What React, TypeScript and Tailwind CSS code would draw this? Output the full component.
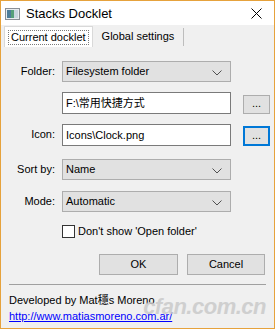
import React from "react";

const Chevron = () => (
  <svg width="10" height="6" viewBox="0 0 10 6" className="absolute right-[8px] top-[8px]">
    <path d="M0.5 0.5 L5 5 L9.5 0.5" fill="none" stroke="#505050" strokeWidth="1" />
  </svg>
);

const Select = ({ value, top }: { value: string; top: string }) => (
  <div className={`relative h-[21px] w-[169px] bg-[#e1e1e1] border border-[#adadad] pl-[3px] leading-[19px] ${top}`}>
    {value}
    <Chevron />
  </div>
);

export default function App() {
  return (
    <div
      className="w-[275px] h-[329px] border border-[#e6a23c] bg-[#f0f0f0] flex flex-col text-[11px] text-black overflow-hidden"
      style={{ fontFamily: '"Liberation Sans", "Noto Sans CJK SC", sans-serif' }}
    >
      {/* Title bar */}
      <div className="h-[24px] bg-white flex items-center shrink-0">
        <svg width="15" height="12" viewBox="0 0 15 12" className="ml-[4px] mt-[1px]">
          <rect x="0.5" y="0.5" width="14" height="11" fill="#e8ecef" stroke="#8a8f96" />
          <rect x="2" y="2" width="4" height="8" fill="#4d7d9a" />
          <rect x="6" y="2" width="3" height="8" fill="#56a07a" />
          <rect x="9" y="2" width="4" height="8" fill="#c9d6df" />
        </svg>
        <span className="ml-[6px] text-[13px] leading-none">Stacks Docklet</span>
        <svg width="11" height="11" viewBox="0 0 11 11" className="ml-auto mr-[12px] mt-[1px]">
          <path d="M0.5 0.5 L10.5 10.5 M10.5 0.5 L0.5 10.5" stroke="#000" strokeWidth="1" />
        </svg>
      </div>

      {/* Tabs */}
      <div className="flex items-end h-[22px] pl-[3px] shrink-0">
        <div className="h-[21px] bg-white border border-[#d9d9d9] border-b-0 px-[3px] flex items-center">
          <div className="border border-dotted border-[#7a7a7a] px-[2px] h-[15px] leading-[13px]">Current docklet</div>
        </div>
        <div className="h-[18px] border-r border-[#bdbdbd] pl-[9px] pr-[9px] leading-[17px] mb-[1px]">Global settings</div>
      </div>

      {/* Form */}
      <div className="grid grid-cols-[53px_auto_auto] gap-x-[7px] items-center mt-[14px] ml-[1px]">
        <div className="text-right">Folder:</div>
        <Select value="Filesystem folder" top="" />
        <div />

        <div />
        <div className="h-[22px] w-[169px] bg-white border border-[#7a7a7a] pl-[3px] leading-[20px] mt-[10px]">F:\常用快捷方式</div>
        <div className="h-[19px] w-[27px] bg-[#e1e1e1] border border-[#adadad] text-center leading-[15px] mt-[12px] ml-[1px]">...</div>

        <div className="text-right mt-[9px]">Icon:</div>
        <div className="h-[22px] w-[169px] bg-white border border-[#7a7a7a] pl-[3px] leading-[20px] mt-[9px]">Icons\Clock.png</div>
        <div className="h-[20px] w-[27px] bg-[#e1e1e1] border-2 border-[#0078d7] text-center leading-[14px] mt-[12px] ml-[1px]">...</div>

        <div className="text-right mt-[13px]">Sort by:</div>
        <Select value="Name" top="mt-[13px]" />
        <div />

        <div className="text-right mt-[11px]">Mode:</div>
        <Select value="Automatic" top="mt-[11px]" />
        <div />
      </div>

      <div className="flex items-center ml-[61px] mt-[13px]">
        <div className="w-[13px] h-[13px] bg-white border border-[#333]" />
        <span className="ml-[3px] leading-[13px]">Don&apos;t show &apos;Open folder&apos;</span>
      </div>

      <div className="flex ml-[98px] mt-[16px] gap-[9px]">
        <div className="w-[79px] h-[21px] bg-[#e1e1e1] border border-[#adadad] text-center leading-[19px]">OK</div>
        <div className="w-[78px] h-[21px] bg-[#e1e1e1] border border-[#adadad] text-center leading-[19px]">Cancel</div>
      </div>

      <div className="mx-[8px] mt-[9px] h-px bg-[#a0a0a0]" />

      <div className="relative ml-[8px] mt-[7px] leading-[16px]">
        <div>Developed by Mat穩s Moreno</div>
        <div className="text-[#0000ff] underline">http://www.matiasmoreno.com.ar/</div>
        <div
          className="absolute right-[8px] top-[4px] text-[22px] italic font-bold text-[#c8c8c8] tracking-[-0.5px] leading-[22px] opacity-80 pointer-events-none"
          style={{ fontFamily: '"Liberation Sans", sans-serif' }}
        >
          cfan.com.cn
        </div>
      </div>
    </div>
  );
}
